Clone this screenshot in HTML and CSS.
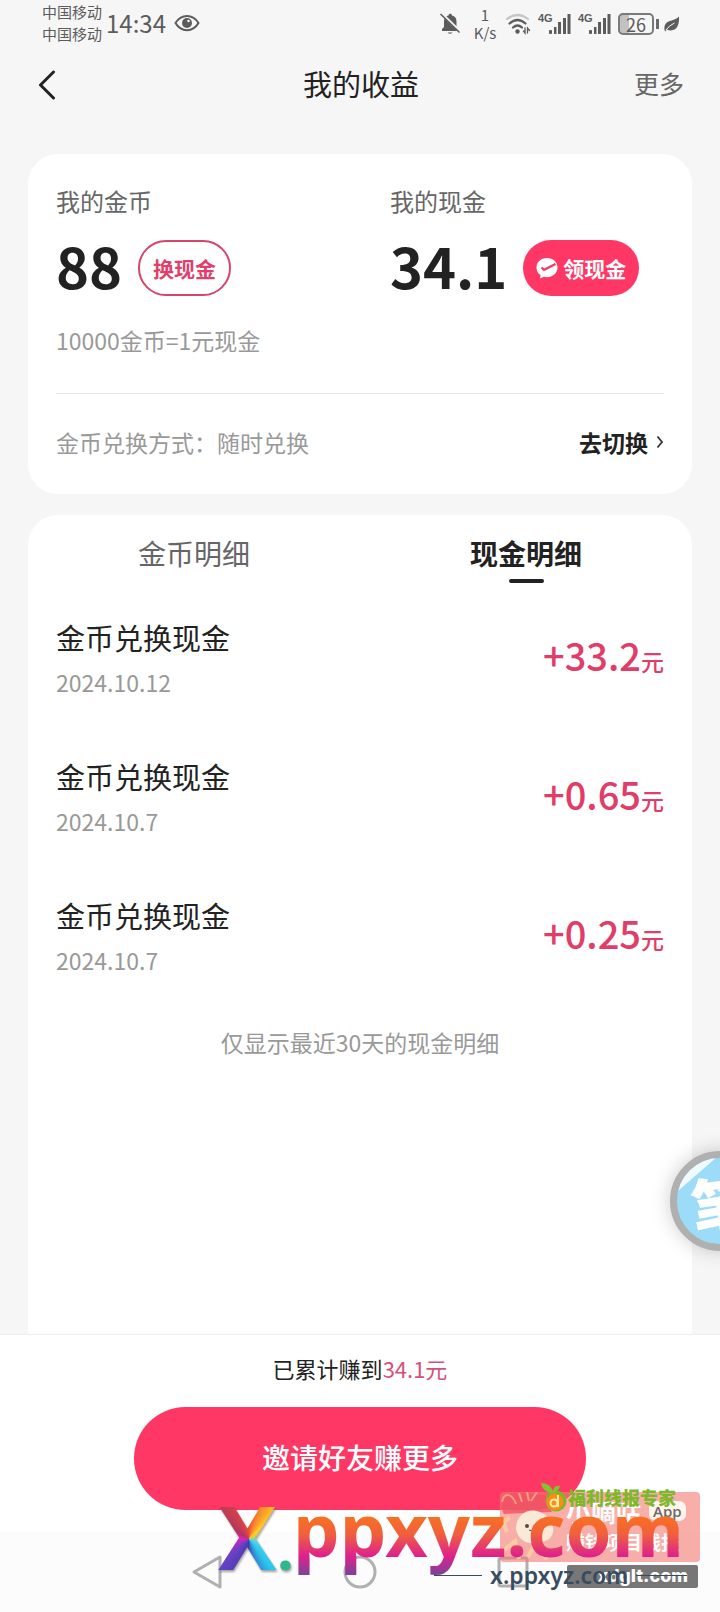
FILE: index.html
```html
<!DOCTYPE html>
<html lang="zh-CN">
<head>
<meta charset="utf-8">
<meta name="viewport" content="width=device-width, initial-scale=1">
<title>我的收益</title>
<link rel="stylesheet" href="styles.css">
</head>
<body>
<div class="screen">
  <div class="status">
    <div class="carriers"><span>中国移动</span><span>中国移动</span></div>
    <span class="clock">14:34</span>
    <svg class="eye" width="26" height="18" viewBox="0 0 26 18"><path d="M1.500 9C7-.5 19-.5 24.500 9C19 18.500 7 18.500 1.500 9Z" fill="none" stroke="#5c5c5c" stroke-width="2"/><circle cx="13" cy="9" r="5" fill="#5c5c5c"/><circle cx="14.500" cy="7" r="1.300" fill="#f6f6f6"/></svg>
    <div class="status-right">
      <svg width="22" height="24" viewBox="0 0 22 24"><path d="M3 19V17L5 15V10C5 6 7 4 9.500 3.500C9.500 1 13 1 13 3.500C16 4 17.500 6 17.500 10V15L19.500 17V19Z" fill="#5c5c5c"/><path d="M8.500 20.500H13.500Q11 23 8.500 20.500Z" fill="#5c5c5c"/><path d="M2.500 1.500L21 19.500" stroke="#f6f6f6" stroke-width="3"/><path d="M1.500 2L20.500 20.500" stroke="#5c5c5c" stroke-width="1.600"/></svg>
      <div class="speed"><span>1</span><span>K/s</span></div>
      <svg class="wifi" width="26" height="24" viewBox="0 0 26 24" fill="none" stroke-linecap="round"><path d="M2 7Q12.500-1 23 7" stroke="#c6c6c6" stroke-width="2.200"/><path d="M4.500 11.500Q12.500 4.500 20.500 11.500M8 15.500Q12.500 11.500 17 15.500" stroke="#5c5c5c" stroke-width="2.200"/><circle cx="12.500" cy="19.500" r="2.200" fill="#5c5c5c"/><path d="M20 16V21L18.500 19M22.500 21V16L24.500 18.500" stroke="#5c5c5c" stroke-width="1.300"/></svg>
      <div class="cell"><span>4G</span><svg width="22" height="22" viewBox="0 0 22 22" fill="#5c5c5c"><rect x="0" y="17" width="3" height="4" rx="1"/><rect x="5" y="14" width="2.500" height="7"/><rect x="9" y="9" width="3" height="12"/><rect x="14" y="5" width="3" height="16"/><rect x="18.500" y="1" width="3" height="20"/></svg></div>
      <div class="cell"><span>4G</span><svg width="22" height="22" viewBox="0 0 22 22" fill="#5c5c5c"><rect x="0" y="17" width="3" height="4" rx="1"/><rect x="5" y="14" width="2.500" height="7"/><rect x="9" y="9" width="3" height="12"/><rect x="14" y="5" width="3" height="16"/><rect x="18.500" y="1" width="3" height="20"/></svg></div>
      <div class="battery"><span>26</span></div>
      <svg width="16" height="16" viewBox="0 0 16 16"><path d="M15 0.500C15.500 9 13 14 7 14.500Q4.500 14.500 3 13.500L1 15.500Q-.5 11 1.500 8C4 4 11 5 15 .5Z" fill="#5c5c5c"/><path d="M2 14Q5 9.500 10.500 7" stroke="#f6f6f6" fill="none"/></svg>
    </div>
  </div>

  <header class="titlebar">
    <button class="back" aria-label="返回"><svg width="18" height="30" viewBox="0 0 18 30"><path d="M15.500 2L2.500 15L15.500 28" fill="none" stroke="#222" stroke-width="3" stroke-linecap="round" stroke-linejoin="round"/></svg></button>
    <h1>我的收益</h1>
    <button class="more">更多</button>
  </header>

  <section class="card balance">
    <div class="accounts">
      <div>
        <div class="label">我的金币</div>
        <div class="value"><strong>88</strong><button class="pill outline">换现金</button></div>
      </div>
      <div>
        <div class="label">我的现金</div>
        <div class="value"><strong>34.1</strong><button class="pill solid"><svg width="22" height="22" viewBox="0 0 22 22"><path d="M11 1C5 1 .5 5 .5 10.500C.5 14 2 16.500 4.500 18L4 21.500L8 19.800C15 21.500 21.500 17 21.500 10.500C21.500 5 17 1 11 1Z" fill="#fff"/><path d="M5.500 10.500L8 12.800L19.500 7" fill="none" stroke="#f73865" stroke-width="2.200"/></svg>领现金</button></div>
      </div>
    </div>
    <p class="rate">10000金币=1元现金</p>
    <div class="mode"><span>金币兑换方式：随时兑换</span><a href="#switch">去切换<svg width="8" height="14" viewBox="0 0 8 14"><path d="M1.500 1.500L6 7L1.500 12.500" fill="none" stroke="#333" stroke-width="1.800"/></svg></a></div>
  </section>

  <section class="card details">
    <div class="tabs" role="tablist">
      <button role="tab" aria-selected="false">金币明细</button>
      <button role="tab" aria-selected="true" class="active">现金明细</button>
    </div>
    <ul class="records">
      <li><div><div class="name">金币兑换现金</div><time>2024.10.12</time></div><div class="amount">+33.2<small>元</small></div></li>
      <li><div><div class="name">金币兑换现金</div><time>2024.10.7</time></div><div class="amount">+0.65<small>元</small></div></li>
      <li><div><div class="name">金币兑换现金</div><time>2024.10.7</time></div><div class="amount">+0.25<small>元</small></div></li>
    </ul>
    <p class="note">仅显示最近30天的现金明细</p>
  </section>

  <footer class="invite">
    <p>已累计赚到<span>34.1元</span></p>
    <button>邀请好友赚更多</button>
  </footer>

  <nav class="sysnav">
    <svg width="32" height="36" viewBox="0 0 32 36"><path d="M29 3V33L3 18Z" fill="none" stroke="#b0b0b0" stroke-width="3" stroke-linejoin="round"/></svg>
    <svg width="34" height="34" viewBox="0 0 34 34"><circle cx="17" cy="17" r="15" fill="none" stroke="#b0b0b0" stroke-width="3"/></svg>
    <svg width="32" height="32" viewBox="0 0 32 32"><rect x="2" y="2" width="28" height="28" rx="2" fill="none" stroke="#b0b0b0" stroke-width="3"/></svg>
  </nav>

  <div class="floating"><span class="ribbon"></span><span class="brush">笔</span></div>

  <div class="marks">
    <div class="promo">
      <svg class="mascot" width="56" height="70" viewBox="0 0 56 70"><path d="M4 22C-2 12 3 2 15 1L45 3L52 20Z" fill="#ef5264" fill-opacity=".8"/><path d="M2 10C4 0 12 1 16 12M19 1L22 10M27 0L29 9M37 0L31 9" fill="none" stroke="#f7a07e" stroke-width="2"/><path d="M7 40Q0 29 10 26M4 58L15 49L19 67M28 65L34 54L47 67" fill="none" stroke="#f9cba0" stroke-width="4"/><path d="M16 37C16 22 29 15 40 20C55 26 58 45 45 49C32 55 18 50 16 37Z" fill="#fbe9d8"/><circle cx="27" cy="34" r="2" fill="#55484d"/><circle cx="36" cy="35" r="2" fill="#55484d"/><path d="M29 38L32 39" stroke="#55484d"/></svg>
      <div class="promo-text"><div><b>小嘀咕</b><em>App</em></div><b class="second">赚钱项目线报</b></div>
    </div>
    <div class="expert"><svg width="29" height="30" viewBox="0 0 29 30"><circle cx="17" cy="19" r="10.500" fill="#78b82b"/><path d="M12 11C7 10 3 7 2 1C8 1 12 4 14 9Q15 3 21 4Q20 10 12 11Z" fill="#7fc52b"/><circle cx="16" cy="20" r="8.500" fill="#ff8b16"/><circle cx="15" cy="21" r="3.500" fill="none" stroke="#fff0a8" stroke-width="2"/><path d="M19 13V25" stroke="#fff0a8" stroke-width="2"/></svg><b>福利线报专家</b></div>
    <div class="domain">xdglt.com</div>
    <div class="logo"><div class="logo-mark"><span class="logo-x">X</span><span class="logo-dot">.</span></div><span class="logo-rest">ppxyz.com</span></div>
    <div class="site"><i></i><span>x.ppxyz.com</span><i></i></div>
  </div>
</div>
</body>
</html>
```
FILE: styles.css
```css
* { box-sizing: border-box; }
body { margin: 0; background: #f6f6f6; color: #222; font-family: "Noto Sans CJK SC", sans-serif; }
button { border: 0; background: none; padding: 0; font: inherit; color: inherit; cursor: pointer; }
h1, p, ul { margin: 0; padding: 0; }
svg { display: block; flex: none; }
.screen { position: relative; min-height: 100vh; display: flex; flex-direction: column; overflow: hidden; }

.status { height: 46px; padding: 0 40px 0 42px; display: flex; align-items: center; color: #5c5c5c; }
.carriers { display: flex; flex-direction: column; font-size: 15px; line-height: 22px; }
.clock { font-size: 24px; line-height: 32px; margin-left: 4px; }
.eye { margin-left: 8px; }
.status-right { margin-left: auto; padding-top: 2px; display: flex; align-items: center; gap: 7px; }
.speed { display: flex; flex-direction: column; align-items: center; font-size: 15px; line-height: 18px; width: 26px; margin-left: 4px; }
.cell { display: flex; align-items: flex-start; }
.cell span { font-size: 11px; line-height: 10px; font-weight: 700; font-family: "Liberation Sans", sans-serif; width: 11px; display: flex; }
.battery { position: relative; width: 36px; height: 22px; border: 2px solid #7a7a7a; border-radius: 5px; font-size: 18px; line-height: 18px; text-align: center; background: linear-gradient(90deg, #c2c2c2 9px, transparent 9px); margin-right: 3px; }
.battery::after { content: ""; position: absolute; right: -7px; top: 4px; width: 3px; height: 10px; background: #6a6a6a; }

.titlebar { height: 108px; padding: 0 36px 34px 38px; display: grid; grid-template-columns: 1fr auto 1fr; align-items: center; }
.titlebar h1 { font-size: 29px; line-height: 40px; font-weight: 400; }
.back { justify-self: start; padding-top: 4px; }
.more { justify-self: end; font-size: 25px; line-height: 36px; color: #666; }

.card { background: #fff; border-radius: 30px; margin: 0 28px; padding: 0 28px; }
.balance { padding-top: 29px; }
.accounts { display: grid; grid-template-columns: 334px 1fr; }
.label { font-size: 24px; line-height: 36px; color: #666; }
.value { display: flex; align-items: center; gap: 16px; height: 56px; margin-top: 21px; }
.value strong { font-size: 56px; line-height: 56px; font-weight: 700; padding-bottom: 6px; }
.pill { height: 56px; border-radius: 28px; padding: 0 13px; font-size: 21px; font-weight: 700; display: flex; align-items: center; gap: 5px; }
.outline { border: 2px solid #d5456d; color: #df3f6b; }
.solid { background: #ff3764; color: #fff; }
.rate { font-size: 23px; line-height: 34px; color: #999; margin: 27px 0 36px; }
.mode { border-top: 1px solid #e8e8e8; height: 101px; padding-bottom: 4px; display: flex; align-items: center; justify-content: space-between; font-size: 23px; color: #999; }
.mode a { display: flex; align-items: center; gap: 8px; color: #222; font-weight: 700; text-decoration: none; }

.details { flex: 1; margin-top: 21px; padding: 0 28px; border-radius: 30px 30px 0 0; }
.tabs { display: grid; grid-template-columns: 1fr 1fr; margin: 0 -28px; }
.tabs button { display: flex; flex-direction: column; align-items: center; font-size: 28px; line-height: 40px; padding-top: 18px; height: 68px; color: #666; }
.tabs .active { font-weight: 700; color: #222; }
.active::after { content: ""; width: 35px; height: 4px; border-radius: 2px; background: #222; margin-top: 6px; flex: none; }
.records { list-style: none; padding-top: 33px; }
.records li { display: flex; align-items: center; justify-content: space-between; height: 83px; margin-bottom: 56px; }
.name { font-size: 29px; line-height: 42px; }
time { display: block; font-size: 23px; line-height: 34px; color: #999; margin-top: 7px; }
.amount { color: #e03d69; font-size: 38px; line-height: 48px; font-weight: 500; }
.amount small { font-size: 23px; }
.note { text-align: center; font-size: 23px; line-height: 34px; color: #999; margin-top: -8px; }

.invite { background: #fff; border-top: 1px solid #eee; padding: 16px 28px 22px; display: flex; flex-direction: column; align-items: center; gap: 22px; }
.invite p { font-size: 22px; line-height: 34px; }
.invite p span { color: #d6507a; }
.invite button { width: 68%; height: 103px; padding-bottom: 4px; border-radius: 52px; background: #ff3764; color: #fff; font-size: 28px; font-weight: 500; }
.sysnav { height: 80px; background: #fcfcfc; display: flex; justify-content: center; align-items: center; gap: 120px; }

.floating { position: absolute; right: -50px; top: 1151px; width: 100px; height: 100px; border-radius: 50%; border: 7px solid #b0b0b0; background: #9ddcf8; box-shadow: 0 0 20px #0003; overflow: hidden; color: #fff; }
.ribbon { position: absolute; left: -10px; top: 7px; width: 60px; height: 8px; background: #f1faff; transform: rotate(-41deg); }
.brush { position: absolute; left: 14px; top: 12px; font-size: 66px; line-height: 66px; font-weight: 900; transform: rotate(-8deg); }

.marks { position: absolute; right: 0; bottom: 0; width: 520px; height: 140px; pointer-events: none; }
.promo { position: absolute; right: 20px; top: 20px; width: 200px; height: 70px; display: flex; border-radius: 4px; background: #f57a7099; color: #fff; }
.promo-text { display: flex; flex-direction: column; font-size: 25px; line-height: 38px; padding-left: 10px; }
.promo-text div { display: flex; align-items: center; gap: 8px; }
.promo-text em { font: 600 15px/20px "Open Sans", sans-serif; color: #6d6869; background: #fff5ec; border-radius: 7px; padding: 0 4px; }
.promo-text .second { font-size: 19px; line-height: 24px; }
.expert { position: absolute; left: 339px; top: 10px; display: flex; align-items: center; color: #7cb82a; font-size: 18px; line-height: 26px; }
.expert b { font-weight: 900; }
.domain { position: absolute; right: 22px; top: 93px; width: 131px; height: 23px; border-radius: 2px; background: #777; color: #fff; font: 800 18px/22px Inter, sans-serif; text-align: right; padding-right: 10px; }
.logo { position: absolute; left: 18px; top: 7px; display: flex; align-items: flex-start; font: 700 74px/100px "Noto Sans", sans-serif; }
.logo-mark { display: flex; align-items: baseline; line-height: 114px; filter: drop-shadow(1px 2px 1px #5558); }
.logo-x, .logo-rest { background-clip: text; -webkit-background-clip: text; color: transparent; }
.logo-x { font-size: 88px; background-image: conic-gradient(from 0deg at 31px 60px, #f04a35, #ffcb24 45deg, #4bd3e8 120deg, #28c4ed 145deg, #4636a8 185deg, #6442c4 225deg, #df22bd 270deg, #b03561 305deg, #f04a35); }
.logo-dot { font-size: 60px; color: #32b68b; width: 16px; }
.logo-rest { background-image: linear-gradient(#f97022 38%, #f0603c 55%, #df218d 77%, #7b4397 96%); }
.site { position: absolute; left: 234px; right: 33px; top: 88px; display: flex; align-items: center; gap: 8px; color: #384c60; font: 600 23px/30px "Noto Sans", sans-serif; }
.site i { height: 1px; width: 48px; background: #384c60; }
.site i:last-child { flex: 1; }
```
